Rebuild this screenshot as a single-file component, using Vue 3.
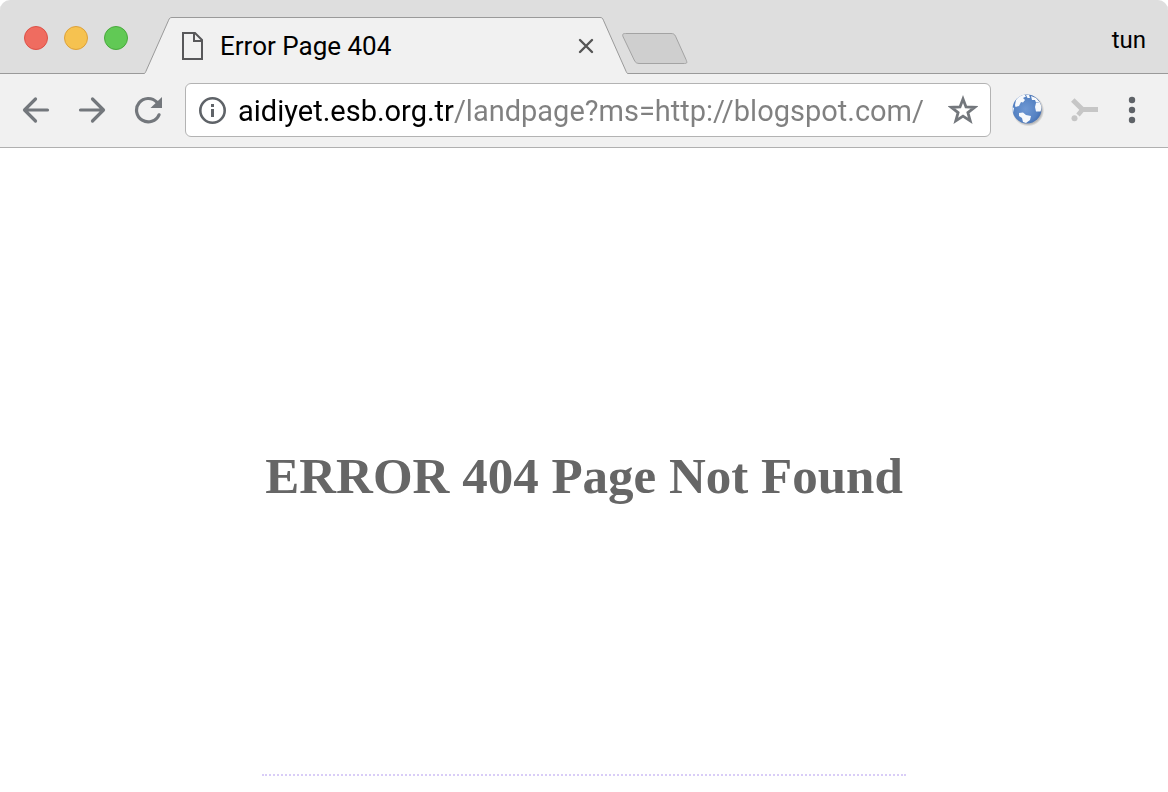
<script setup>
import { ref } from 'vue'

const tabTitle = ref('Error Page 404')
const profile = ref('tun')
const address = ref('aidiyet.esb.org.tr/landpage?ms=http://blogspot.com/')
</script>

<template>
  <div class="window">
    <header class="strip">
      <div class="lights">
        <button class="light red" type="button" aria-label="Close window"></button>
        <button class="light yellow" type="button" aria-label="Minimize window"></button>
        <button class="light green" type="button" aria-label="Zoom window"></button>
      </div>
      <div class="tab">
        <svg class="slant" width="28" height="57" viewBox="0 0 28 57" aria-hidden="true">
          <path d="M0 57V56.5C1 56.5 1.4 55.5 1.8 54.6L24.6 3.2C25.4 1.2 26 .5 28 .5V57Z" fill="#f1f1f1" />
          <path d="M0 56.5C1 56.5 1.4 55.5 1.8 54.6L24.6 3.2C25.4 1.2 26 .5 28 .5" fill="none" stroke="#9a9a9a" />
        </svg>
        <div class="tab-body">
          <svg class="doc" width="22" height="28" viewBox="0 0 22 28" aria-hidden="true">
            <path d="M1 1H13L20 8V27H1Z M12 1V9H20" fill="none" stroke="#58585a" stroke-width="2" />
          </svg>
          <span class="title">{{ tabTitle }}</span>
          <button class="icon-button" type="button" aria-label="Close tab">
            <svg width="16" height="16" viewBox="0 0 16 16">
              <path d="M2 2L14 14M14 2L2 14" fill="none" stroke="#555" stroke-width="2.4" stroke-linecap="round" />
            </svg>
          </button>
        </div>
        <svg class="slant" width="28" height="57" viewBox="0 0 28 57" aria-hidden="true">
          <path d="M28 57V56.5C27 56.5 26.6 55.5 26.2 54.6L3.4 3.2C2.6 1.2 2 .5 0 .5V57Z" fill="#f1f1f1" />
          <path d="M28 56.5C27 56.5 26.6 55.5 26.2 54.6L3.4 3.2C2.6 1.2 2 .5 0 .5" fill="none" stroke="#9a9a9a" />
        </svg>
      </div>
      <button class="icon-button new-tab" type="button" aria-label="New tab">
        <svg width="66" height="32" viewBox="0 0 66 32">
          <path d="M3.500 .5H49C51.500 .5 52.500 1.200 53.500 3.200L64 26.500C65.400 29.800 65 30.500 62.500 30.500H18C14.800 30.500 13.500 29.800 12.200 27L1.200 4C-.1 1.300 1 .5 3.500 .5Z" fill="#cfcfcf" stroke="#a3a3a3" />
        </svg>
      </button>
      <button class="profile" type="button">{{ profile }}</button>
    </header>

    <nav class="toolbar">
      <button class="icon-button" type="button" aria-label="Back">
        <svg width="28" height="28" viewBox="0 0 28 28">
          <path d="M25.500 14H3M13.500 3L2.500 14L13.500 25" fill="none" stroke="#73777c" stroke-width="3.200" stroke-linecap="round" stroke-linejoin="round" />
        </svg>
      </button>
      <button class="icon-button" type="button" aria-label="Forward">
        <svg width="28" height="28" viewBox="0 0 28 28">
          <path d="M2.500 14H25M14.500 3L25.500 14L14.500 25" fill="none" stroke="#73777c" stroke-width="3.200" stroke-linecap="round" stroke-linejoin="round" />
        </svg>
      </button>
      <button class="icon-button" type="button" aria-label="Reload">
        <svg width="28" height="28" viewBox="0 0 28 28">
          <path d="M25 18.800A11.700 11.700 0 1 1 22.800 6.200" fill="none" stroke="#73777c" stroke-width="3.200" stroke-linecap="round" />
          <path d="M28 1V12H16.500Z" fill="#73777c" />
        </svg>
      </button>
      <div class="address">
        <button class="icon-button" type="button" aria-label="View site information">
          <svg width="28" height="28" viewBox="0 0 28 28">
            <circle cx="14.500" cy="14.500" r="12.200" fill="none" stroke="#5f6368" stroke-width="2.600" />
            <path d="M14.500 13V21M14.500 8V11" stroke="#5f6368" stroke-width="3" />
          </svg>
        </button>
        <input v-model="address" class="url" type="text" aria-label="Address" spellcheck="false" />
        <button class="icon-button" type="button" aria-label="Bookmark this page">
          <svg width="30" height="30" viewBox="0 0 30 30">
            <path d="M15 4L18 11.900L26.600 12.300L19.900 17.600L22.200 25.800L15 21.100L7.800 25.800L10.100 17.600L3.400 12.300L12 11.900Z" fill="none" stroke="#73777c" stroke-width="2.800" />
          </svg>
        </button>
      </div>
      <button class="icon-button globe" type="button" aria-label="Globe extension">
        <svg width="34" height="34" viewBox="0 0 34 34">
          <defs>
            <radialGradient id="sea" cx=".45" cy=".5" r=".6">
              <stop offset="0" stop-color="#6f98d3" />
              <stop offset=".7" stop-color="#5582c3" />
              <stop offset="1" stop-color="#4069ab" />
            </radialGradient>
            <radialGradient id="shade">
              <stop offset=".85" stop-color="#b9b9b9" />
              <stop offset="1" stop-color="#b9b9b9" stop-opacity="0" />
            </radialGradient>
            <clipPath id="disc"><circle cx="16" cy="16" r="14.500" /></clipPath>
          </defs>
          <circle cx="17.200" cy="17.400" r="16" fill="url(#shade)" />
          <circle cx="16" cy="16" r="14.500" fill="url(#sea)" />
          <g clip-path="url(#disc)" fill="#f7f9fc">
            <path d="M4 12L5 7L8 3L13 1L15 3.500L12 5L14 7L12 9.500L10 9L8 13L4.500 14Z" />
            <path d="M15 2L18 1.500L19 5L16.500 5Z" />
            <path d="M20 3L25 5L28.500 9L25 9.500L24 7L21 7Z" />
            <path d="M25 10L29 9L31 14L29.500 18.500L25 18.500L24 14Z" />
            <path d="M8 20L12 19.500L15 22L20 23L19 27L15 30L12 29L11 25L8 23Z" />
            <path d="M1 14L3 15L2 20L1 19Z" />
          </g>
        </svg>
      </button>
      <button class="icon-button merge" type="button" aria-label="Branch extension">
        <svg width="28" height="24" viewBox="0 0 28 24">
          <path d="M1.800 2L11.500 11.500H27" fill="none" stroke="#c6c6c6" stroke-width="5" />
          <path d="M12 11L7 17" stroke="#c6c6c6" stroke-width="4.500" />
          <circle cx="3.500" cy="20.300" r="3" fill="#c6c6c6" />
        </svg>
      </button>
      <button class="icon-button menu" type="button" aria-label="Menu">
        <svg width="8" height="28" viewBox="0 0 8 28">
          <g fill="#5f6368">
            <circle cx="4" cy="4" r="3.200" />
            <circle cx="4" cy="14" r="3.200" />
            <circle cx="4" cy="24" r="3.200" />
          </g>
        </svg>
      </button>
    </nav>

    <main class="page">
      <h1>ERROR 404 Page Not Found</h1>
    </main>
  </div>
</template>

<style>
body {
  background: #fff;
}
</style>

<style scoped>
.window {
  min-height: 100vh;
  display: flex;
  flex-direction: column;
  font-family: Roboto, "Liberation Sans", sans-serif;
}
button {
  margin: 0;
  padding: 0;
  border: 0;
  background: none;
  font: inherit;
  color: #000;
}
.icon-button {
  flex: none;
  display: block;
}
svg {
  display: block;
  flex: none;
}
.strip {
  height: 74px;
  display: flex;
  align-items: flex-end;
  background: #dedede;
  border-radius: 10px 10px 0 0;
  box-shadow: inset 0 -1px #9a9a9a;
}
.lights {
  display: flex;
  gap: 16px;
  padding: 0 16px 24px 24px;
}
.light {
  width: 24px;
  height: 24px;
  border: 1px solid;
  border-radius: 50%;
}
.red {
  background: #ef6c60;
  border-color: #dd5147;
}
.yellow {
  background: #f6c250;
  border-color: #dda13a;
}
.green {
  background: #61c955;
  border-color: #48a93c;
}
.tab {
  flex: 0 1 484px;
  min-width: 0;
  display: flex;
}
.tab-body {
  flex: 1;
  min-width: 0;
  display: flex;
  align-items: center;
  padding: 0 6px 0 10px;
  background: #f1f1f1;
  border-top: 1px solid #9a9a9a;
}
.title {
  flex: 1;
  margin-left: 16px;
  font-size: 26px;
  line-height: 28px;
  white-space: nowrap;
  overflow: hidden;
}
.new-tab {
  margin: 0 0 9px -6px;
}
.profile {
  margin: 0 22px 20px auto;
  font-size: 24px;
  line-height: 28px;
}
.toolbar {
  box-sizing: border-box;
  height: 74px;
  display: flex;
  align-items: center;
  gap: 28px;
  padding: 0 32px 2px 22px;
  background: #f1f1f1;
  border-bottom: 1px solid #b0b0b0;
}
.address {
  flex: 1;
  min-width: 0;
  box-sizing: border-box;
  height: 54px;
  display: flex;
  align-items: center;
  margin-left: -5px;
  padding: 0 12px;
  background: #fff;
  border: 1px solid #b3b3b3;
  border-radius: 6px;
}
.url {
  flex: 1;
  min-width: 0;
  height: 36px;
  margin: 0 8px 0 12px;
  padding: 2px 0 0;
  border: 0;
  outline: 0;
  font-family: Roboto, "Liberation Sans", sans-serif;
  font-size: 29px;
  color: transparent;
  caret-color: #000;
  background: linear-gradient(to right, #000 216px, #808080 216px);
  background-clip: text;
}
.globe {
  margin-left: -8px;
}
.merge {
  margin-left: -2px;
}
.menu {
  margin-left: 1px;
}
.page {
  flex: 1;
  display: flex;
  flex-direction: column;
  align-items: center;
}
h1 {
  margin: 0;
  padding: 288px 3px 258px;
  border-bottom: 2px dotted #d9cdf7;
  font-family: Georgia, "Liberation Serif", serif;
  font-size: 51px;
  line-height: 80px;
  font-weight: bold;
  color: #666;
  white-space: nowrap;
}
</style>
